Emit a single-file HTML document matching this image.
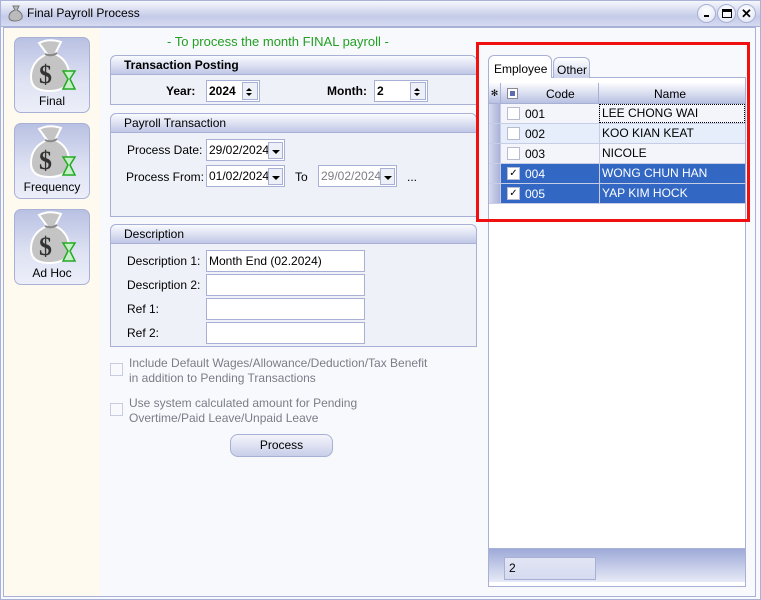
<!DOCTYPE html>
<html><head><style>
*{box-sizing:border-box;margin:0;padding:0}
body{width:761px;height:600px;position:relative;overflow:hidden;font-family:"Liberation Sans",sans-serif;font-size:12px;color:#000;background:#fff}
.a{position:absolute}
.tb{left:0;top:0;width:761px;height:27px;background:linear-gradient(#f6f7fc,#c4cbe8 60%,#d7dcf0);border:1px solid #a9b1d8;border-bottom:none}
.wb{position:absolute;width:19px;height:19px;border-radius:50%;background:radial-gradient(circle at 50% 35%,#fff,#dfe3f3);border:1px solid #a8b0d6;top:4px;font-weight:bold;text-align:center;line-height:17px;font-size:13px}
.frame{left:0;top:26px;width:761px;height:574px;border:1px solid #a9b1d8;background:#f8f9fd}
.inner{left:3px;top:27px;width:753px;height:570px;border:1px solid #a9b1d8}
.side{left:4px;top:28px;width:96px;height:568px;background:#fffaef}
.btn{left:14px;width:76px;height:76px;border:1px solid #a8b0d6;border-radius:7px;background:linear-gradient(#b9c1e3,#dfe3f3 60%,#eceff9);text-align:center;font-size:12px}
.btn span{position:absolute;left:0;right:0;bottom:4px}
.grp{left:110px;width:367px;border:1px solid #a8b0d6;background:#eff1f9;border-radius:6px 6px 0 0}
.gh{position:absolute;left:0;top:0;right:0;height:19px;background:linear-gradient(#fafbff,#c0c7e6);border-bottom:1px solid #a8b0d6;border-radius:6px 6px 0 0;padding-left:13px;line-height:18px}
.inp{position:absolute;height:22px;border:1px solid #a8b0d6;background:#fff;padding-left:2px;line-height:20px}
.dd{position:absolute;right:1px;top:2px;width:15px;height:17px;border:1px solid #a8b0d6;background:#eef0f8}
.dd:after{content:"";position:absolute;left:3px;top:7px;border:4px solid transparent;border-top:4px solid #000}
.sp{position:absolute;right:1px;top:1px;width:16px;height:18px;border:1px solid #a8b0d6;background:#eef0f8}
.sp:before{content:"";position:absolute;left:3px;top:2px;border:3px solid transparent;border-bottom:3px solid #000}
.sp:after{content:"";position:absolute;left:3px;top:10px;border:3px solid transparent;border-top:3px solid #000}
.lbl{position:absolute}
.cb{position:absolute;width:13px;height:13px;border:1px solid #b8bcd0;background:#fff}
.gray{color:#7c7c88}
.row{position:absolute;left:489px;width:256px;height:20px;border-bottom:1px solid #c8cde6}
.row .ind{position:absolute;left:0;top:0;width:12px;height:19px;background:linear-gradient(90deg,#d7dcf0,#a9b1d8);border-right:1px solid #c8cde6}
.row .c{position:absolute;left:36px;top:3px}
.row .n{position:absolute;left:110px;top:0;height:19px;border-left:1px solid #c8cde6;padding-left:2px;line-height:19px;width:146px}
.row .k{left:18px;top:3px}
.sel{background:#3268c4;color:#fff}
</style></head><body>
<div class="a tb"></div>
<svg class="a" style="left:7px;top:4px" width="18" height="18" viewBox="0 0 18 18"><path d="M6 2 L12 2 L10 6 Q16 9 15 14 Q13 17 8 17 Q2 17 2 13 Q2 8 8 6 Z" fill="#bbb" stroke="#777"/></svg>
<div class="a" style="left:27px;top:6px;font-size:12px">Final Payroll Process</div>
<div class="wb" style="left:697px"><div style="position:absolute;left:6px;top:10px;width:5px;height:2px;background:#000"></div></div>
<div class="wb" style="left:717px"><div style="position:absolute;left:4px;top:4px;width:10px;height:9px;border:1px solid #000;border-top-width:3px"></div></div>
<div class="wb" style="left:737px">✕</div>
<div class="a frame"></div>
<div class="a inner"></div>
<div class="a side"></div>

<div class="a btn" style="top:37px"><svg class="a" style="left:12px;top:1px" width="52" height="54" viewBox="0 0 52 54"><path d="M12 4 Q22 -1 34 3 L28 15 Q44 22 42 42 Q38 52 22 52 Q4 52 4 38 Q4 22 20 15 Z" fill="#c4c4c4" stroke="#fff" stroke-width="2"/><path d="M18 15 Q24 18 30 14" stroke="#888" stroke-width="2" fill="none"/><text x="12" y="44" font-size="26" font-family="Liberation Serif" font-weight="bold" fill="#333">$</text><path d="M36 32 H48 L43 40 L48 50 H36 L41 40 Z" fill="#c8f0c8" stroke="#2a2" stroke-width="1.5"/></svg><span>Final</span></div>
<div class="a btn" style="top:123px"><svg class="a" style="left:12px;top:1px" width="52" height="54" viewBox="0 0 52 54"><path d="M12 4 Q22 -1 34 3 L28 15 Q44 22 42 42 Q38 52 22 52 Q4 52 4 38 Q4 22 20 15 Z" fill="#c4c4c4" stroke="#fff" stroke-width="2"/><path d="M18 15 Q24 18 30 14" stroke="#888" stroke-width="2" fill="none"/><text x="12" y="44" font-size="26" font-family="Liberation Serif" font-weight="bold" fill="#333">$</text><path d="M36 32 H48 L43 40 L48 50 H36 L41 40 Z" fill="#c8f0c8" stroke="#2a2" stroke-width="1.5"/></svg><span>Frequency</span></div>
<div class="a btn" style="top:209px"><svg class="a" style="left:12px;top:1px" width="52" height="54" viewBox="0 0 52 54"><path d="M12 4 Q22 -1 34 3 L28 15 Q44 22 42 42 Q38 52 22 52 Q4 52 4 38 Q4 22 20 15 Z" fill="#c4c4c4" stroke="#fff" stroke-width="2"/><path d="M18 15 Q24 18 30 14" stroke="#888" stroke-width="2" fill="none"/><text x="12" y="44" font-size="26" font-family="Liberation Serif" font-weight="bold" fill="#333">$</text><path d="M36 32 H48 L43 40 L48 50 H36 L41 40 Z" fill="#c8f0c8" stroke="#2a2" stroke-width="1.5"/></svg><span>Ad Hoc</span></div>

<div class="a" style="left:167px;top:34px;color:#22a022;font-size:13px">- To process the month FINAL payroll -</div>

<div class="a grp" style="top:55px;height:50px"><div class="gh" style="font-weight:bold">Transaction Posting</div></div>
<div class="lbl" style="left:166px;top:84px;font-weight:bold">Year:</div>
<div class="inp" style="left:206px;top:80px;width:54px;font-weight:bold">2024<div class="sp"></div></div>
<div class="lbl" style="left:327px;top:84px;font-weight:bold">Month:</div>
<div class="inp" style="left:374px;top:80px;width:54px;font-weight:bold">2<div class="sp"></div></div>

<div class="a grp" style="top:113px;height:104px"><div class="gh">Payroll Transaction</div></div>
<div class="lbl" style="left:127px;top:143px">Process Date:</div>
<div class="inp" style="left:206px;top:139px;width:79px">29/02/2024<div class="dd"></div></div>
<div class="lbl" style="left:126px;top:170px">Process From:</div>
<div class="inp" style="left:206px;top:165px;width:79px">01/02/2024<div class="dd"></div></div>
<div class="lbl" style="left:295px;top:170px">To</div>
<div class="inp gray" style="left:318px;top:165px;width:79px">29/02/2024<div class="dd"></div></div>
<div class="lbl" style="left:407px;top:170px">...</div>

<div class="a grp" style="top:224px;height:123px"><div class="gh">Description</div></div>
<div class="lbl" style="left:127px;top:254px">Description 1:</div>
<div class="inp" style="left:206px;top:250px;width:159px">Month End (02.2024)</div>
<div class="lbl" style="left:127px;top:278px">Description 2:</div>
<div class="inp" style="left:206px;top:274px;width:159px"></div>
<div class="lbl" style="left:127px;top:302px">Ref 1:</div>
<div class="inp" style="left:206px;top:298px;width:159px"></div>
<div class="lbl" style="left:127px;top:326px">Ref 2:</div>
<div class="inp" style="left:206px;top:322px;width:159px"></div>

<div class="cb" style="left:110px;top:363px;border-color:#c8cce0;background:#f8f9fd"></div>
<div class="lbl gray" style="left:129px;top:356px;line-height:15px">Include Default Wages/Allowance/Deduction/Tax Benefit<br>in addition to Pending Transactions</div>
<div class="cb" style="left:110px;top:403px;border-color:#c8cce0;background:#f8f9fd"></div>
<div class="lbl gray" style="left:129px;top:396px;line-height:15px">Use system calculated amount for Pending<br>Overtime/Paid Leave/Unpaid Leave</div>
<div class="a" style="left:230px;top:434px;width:103px;height:23px;border:1px solid #a8b0d6;border-radius:8px;background:linear-gradient(#f4f5fb,#c8cee9);text-align:center;line-height:21px">Process</div>

<!-- right panel -->
<div class="a" style="left:488px;top:77px;width:258px;height:510px;border:1px solid #a8b0d6;background:#fff"></div>
<div class="a" style="left:488px;top:55px;width:64px;height:23px;border:1px solid #a8b0d6;border-bottom:none;border-radius:6px 6px 0 0;background:#fff;padding:6px 0 0 5px">Employee</div>
<div class="a" style="left:553px;top:57px;width:37px;height:21px;border:1px solid #a8b0d6;border-bottom:none;border-radius:6px 6px 0 0;background:linear-gradient(#fff,#cdd3ec);padding:5px 0 0 3px">Other</div>
<div class="a" style="left:489px;top:83px;width:256px;height:21px;background:linear-gradient(#fbfcff,#b8c0e2);border-bottom:1px solid #a8b0d6"></div>
<div class="a" style="left:489px;top:83px;width:12px;height:21px;border-right:1px solid #a8b0d6;font-size:9px;text-align:center;line-height:21px">✻</div>
<div class="a" style="left:507px;top:88px;width:11px;height:11px;border:1px solid #889;background:#fff"><div style="margin:2px;width:5px;height:5px;background:#5c6db0"></div></div>
<div class="a" style="left:546px;top:87px">Code</div>
<div class="a" style="left:598px;top:83px;width:1px;height:21px;background:#a8b0d6"></div>
<div class="a" style="left:654px;top:87px">Name</div>

<div class="row" style="top:104px;background:#f3f5fb"><div class="ind"></div><div class="cb k"></div><div class="c">001</div><div class="n" style="outline:1px dotted #000;outline-offset:-1px">LEE CHONG WAI</div></div>
<div class="row" style="top:124px;background:#e7eefb"><div class="ind"></div><div class="cb k"></div><div class="c">002</div><div class="n">KOO KIAN KEAT</div></div>
<div class="row" style="top:144px;background:#f3f5fb"><div class="ind"></div><div class="cb k"></div><div class="c">003</div><div class="n">NICOLE</div></div>
<div class="row sel" style="top:164px"><div class="ind"></div><div class="cb k" style="color:#000;font-size:10px;line-height:11px;text-align:center">✓</div><div class="c">004</div><div class="n">WONG CHUN HAN</div></div>
<div class="row sel" style="top:184px"><div class="ind"></div><div class="cb k" style="color:#000;font-size:10px;line-height:11px;text-align:center">✓</div><div class="c">005</div><div class="n">YAP KIM HOCK</div></div>

<div class="a" style="left:489px;top:548px;width:256px;height:34px;background:linear-gradient(#9eaad8,#e7eaf6);border-top:1px solid #a8b0d6"></div>
<div class="a" style="left:504px;top:557px;width:92px;height:23px;border:1px solid #a8b0d6;background:linear-gradient(#e2e5f4,#d6dbf0);padding:3px 0 0 4px">2</div>

<div class="a" style="left:476px;top:42px;width:274px;height:180px;border:3px solid #f01010"></div>
</body></html>
